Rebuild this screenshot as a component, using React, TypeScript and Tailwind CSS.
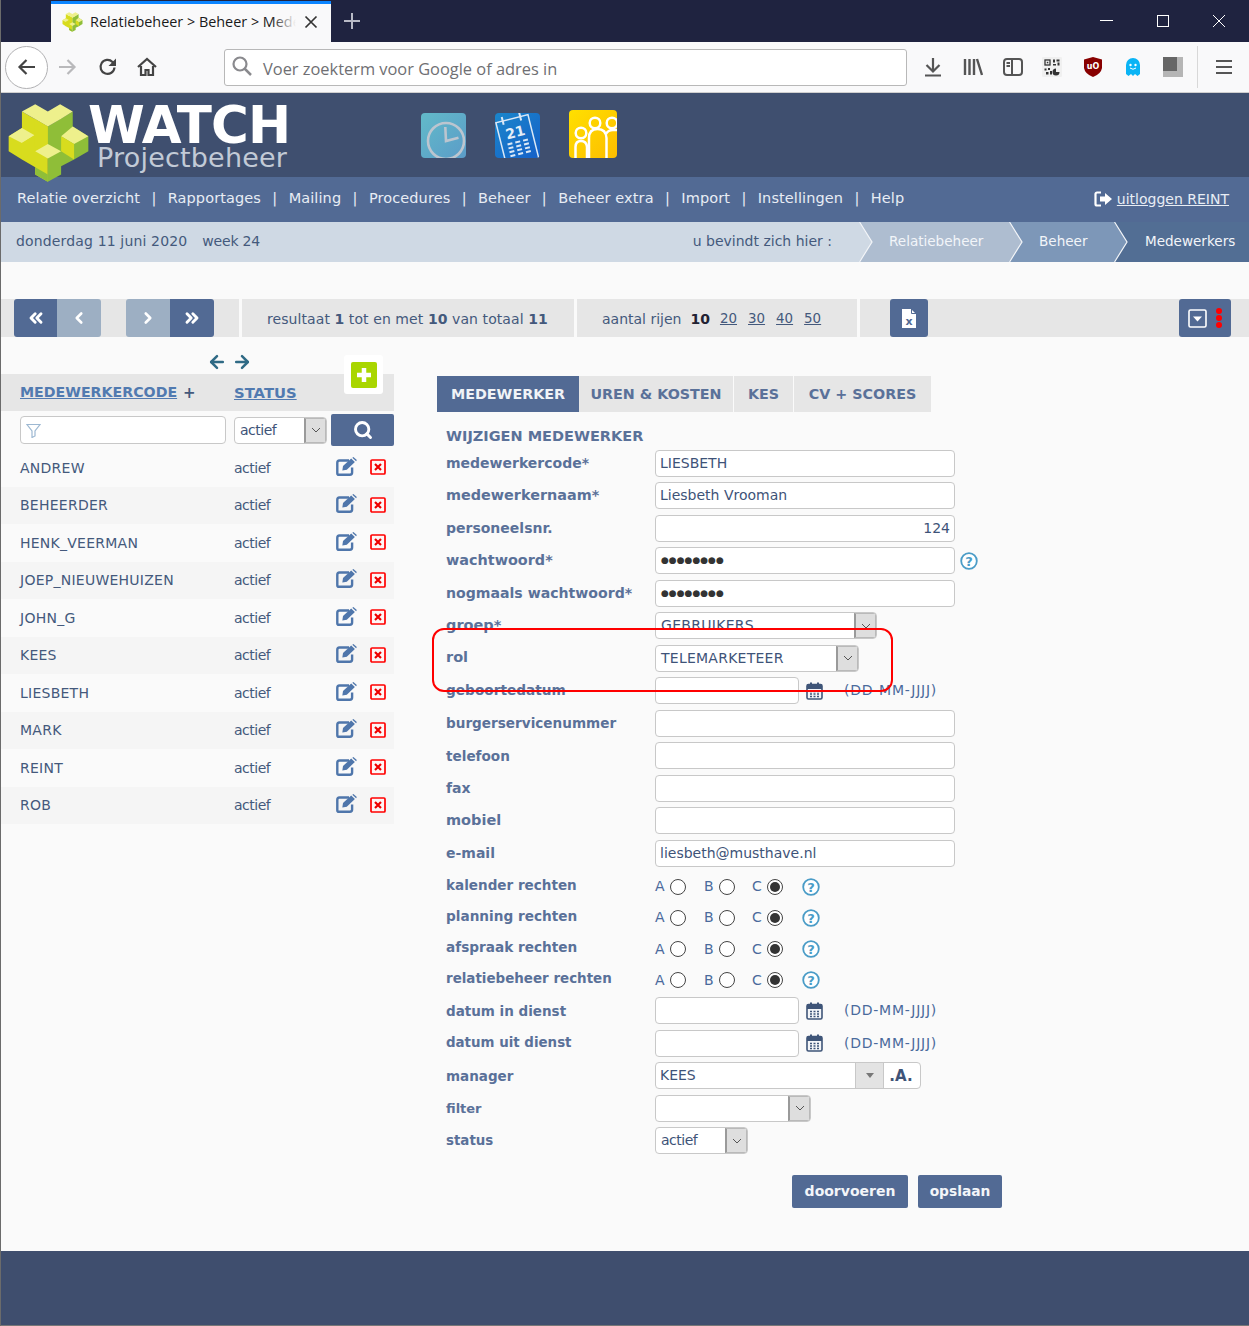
import React from "react";
import { ChevronsLeft, ChevronLeft, ChevronRight, ChevronsRight, Search, ArrowLeft, ArrowRight } from "lucide-react";

const F = "font-['DejaVu_Sans',sans-serif]";
const UI = "font-['Open_Sans','Noto_Sans',sans-serif]";

function Logo({ w, h }: { w: number; h: number }) {
  const top = "#eef08c", left = "#d8dc1e", right = "#8fbe38";
  return (
    <svg width={w} height={h} viewBox="20 25 250 240" className="shrink-0">
      <polygon points="25,125 65,100 65,50 143,95 143,262 105,240 105,218 65,195 25,170" fill={left} />
      <polygon points="143,95 218,50 218,95 265,125 265,170 222,195 183,215 183,240 143,262" fill={right} />
      <polygon points="65,50 105,28 143,50 180,28 218,50 183,72 143,95 103,72" fill={top} />
      <polygon points="25,125 65,100 103,122 65,145" fill={top} />
      <polygon points="218,95 265,125 222,148 183,125" fill={top} />
      <polygon points="183,125 222,148 222,195 183,170" fill={left} />
      <polygon points="65,145 103,122 103,170 65,195" fill={left} />
      <polygon points="103,122 103,72 143,95 143,150 105,170" fill={left} />
      <polygon points="105,170 143,148 183,170 143,192" fill={top} />
      <polygon points="105,218 105,240 143,262 143,240" fill={right} />
    </svg>
  );
}

function ClockTile() {
  return (
    <svg width="45" height="45" viewBox="0 0 45 45" className="mt-[20px] shrink-0">
      <defs>
        <linearGradient id="clk" x1="0" y1="0" x2="1" y2="1"><stop offset="0" stopColor="#62bac9" /><stop offset="1" stopColor="#5b9cc8" /></linearGradient>
        <clipPath id="clkc"><rect width="45" height="45" rx="4" /></clipPath>
      </defs>
      <g clipPath="url(#clkc)">
        <rect width="45" height="45" fill="url(#clk)" />
        <circle cx="25" cy="28" r="18" fill="none" stroke="#bcc5cf" strokeWidth="2.6" />
        <path d="M24.300 14L25 28L37.500 24.700" fill="none" stroke="#bcc5cf" strokeWidth="2.6" />
      </g>
    </svg>
  );
}

function CalendarTile() {
  return (
    <svg width="45" height="45" viewBox="0 0 45 45" className="mt-[20px] shrink-0">
      <defs>
        <linearGradient id="cal" x1="0" y1="0" x2="1" y2="1"><stop offset="0" stopColor="#1a86cb" /><stop offset="1" stopColor="#1660c8" /></linearGradient>
        <clipPath id="calc"><rect width="45" height="45" rx="4" /></clipPath>
      </defs>
      <g clipPath="url(#calc)">
        <rect width="45" height="45" fill="url(#cal)" />
        <g transform="rotate(-14 22 24)" fill="none" stroke="#dbe8f6" strokeWidth="1.500">
          <path d="M5 5h33v45H5z" />
          <path d="M12 1v8M30 1v8" strokeWidth="2" />
          <text x="21.500" y="24" textAnchor="middle" fontSize="14" fontWeight="700" fill="#e4eef8" stroke="none" fontFamily="DejaVu Sans">21</text>
          <path d="M11 29h5M19 29h5M27 29h5M11 33h5M19 33h5M27 33h5M11 37h5M19 37h5M27 37h5M11 41h5M19 41h5M27 41h5" strokeWidth="2" />
        </g>
      </g>
    </svg>
  );
}

function PeopleTile() {
  return (
    <svg width="48" height="48" viewBox="0 0 48 48" className="mt-[17px] shrink-0">
      <defs>
        <linearGradient id="ppl" x1="0" y1="0" x2="1" y2="1"><stop offset="0" stopColor="#ffe000" /><stop offset="1" stopColor="#fdbd00" /></linearGradient>
        <clipPath id="pplc"><rect width="48" height="48" rx="4" /></clipPath>
      </defs>
      <g clipPath="url(#pplc)">
        <rect width="48" height="48" fill="url(#ppl)" />
        <g fill="none" stroke="#fff" strokeWidth="2.500">
          <circle cx="12" cy="23" r="5.300" />
          <circle cx="26" cy="13" r="5.300" />
          <circle cx="43" cy="13" r="5.300" />
          <path d="M6.500 50V37q0-6 5.500-6t6 6v13" />
          <path d="M20 50V28q0-9 8.500-9t9 9v22" />
          <path d="M37 24q2-4 7-4h6" />
        </g>
      </g>
    </svg>
  );
}

function EditIcon() {
  return (
    <svg width="21" height="19" viewBox="0 0 21 19" className="ml-[1px] mt-[-3px] shrink-0">
      <path d="M13 3.500H3.500A2.300 2.300 0 0 0 1.300 5.800v10.400a1.600 1.600 0 0 0 1.600 1.600h11a2.200 2.200 0 0 0 2.200-2.200V10.500" fill="none" stroke="#4f76ab" strokeWidth="2.400" />
      <path d="M7 9 15.200 1.500l3.700 3.400L10.800 12.800 6.300 13.600Z" fill="#4f76ab" />
      <path d="M16.300 0.700 17.400 0 20.800 3 20.100 4.200 Z" fill="#4f76ab" />
    </svg>
  );
}

function DelIcon() {
  return (
    <svg width="16" height="16" viewBox="0 0 16 16" className="ml-[13px] mt-[-1px] shrink-0">
      <rect x="1" y="1" width="14" height="14" rx="1" fill="#fdf6f6" stroke="#f00" strokeWidth="1.700" />
      <path d="M5 5l6 6M11 5l-6 6" stroke="#e00" strokeWidth="2.200" />
    </svg>
  );
}

function Chevron() {
  return (
    <span className="flex h-full w-[22px] shrink-0 items-center justify-center border border-l-2 border-[#b9b9b9] border-l-[#9a9a9a] bg-[#dedede]">
      <svg width="10" height="6" viewBox="0 0 10 6"><path d="M1 1l4 4 4-4" fill="none" stroke="#555" strokeWidth="1" /></svg>
    </span>
  );
}

function Select({ value, w, cls = "" }: { value: string; w: number; cls?: string }) {
  return (
    <div className="flex h-[27px] items-center overflow-hidden rounded-[4px] border border-[#c8c8c8] bg-white" style={{ width: w }}>
      <span className={`flex-1 truncate pl-[5px] text-[14px] text-[#3e5378] ${cls}`}>{value}</span>
      <Chevron />
    </div>
  );
}

function Input({ value = "", w = 300, right = false, dots = false }: { value?: string; w?: number; right?: boolean; dots?: boolean }) {
  return (
    <div className={`flex h-[27px] items-center rounded-[4px] border border-[#c8c8c8] bg-white px-[4px] text-[14px] text-[#3e5378] ${right ? "justify-end" : ""}`} style={{ width: w }}>
      {dots ? <span className="pl-[1px] text-[9px] text-[#333]">●●●●●●●●</span> : value}
    </div>
  );
}

function Help() {
  return (
    <svg width="18" height="18" viewBox="0 0 18 18" className="shrink-0">
      <circle cx="9" cy="9" r="7.800" fill="#fff" stroke="#4a9cc7" strokeWidth="1.800" />
      <text x="9" y="13.600" textAnchor="middle" fontSize="13" fontWeight="700" fill="#4a9cc7" fontFamily="DejaVu Sans">?</text>
    </svg>
  );
}

function Cal() {
  return (
    <svg width="17" height="18" viewBox="0 0 17 18" className="shrink-0">
      <rect x="1" y="2.500" width="15" height="14.500" rx="1.500" fill="#f3f5f8" stroke="#3f5578" strokeWidth="1.600" />
      <rect x="1" y="2.500" width="15" height="4.500" fill="#3f5578" />
      <rect x="4" y="0.500" width="2" height="4" fill="#3f5578" />
      <rect x="11" y="0.500" width="2" height="4" fill="#3f5578" />
      <path d="M4 9.500h2M7.500 9.500h2M11 9.500h2M4 12h2M7.500 12h2M11 12h2M4 14.500h2M7.500 14.500h2M11 14.500h2" stroke="#3f5578" strokeWidth="1.400" />
    </svg>
  );
}

function Radio({ on = false }: { on?: boolean }) {
  return (
    <span className="flex h-[16px] w-[16px] shrink-0 items-center justify-center rounded-full border border-[#444] bg-white">
      {on && <span className="h-[10px] w-[10px] rounded-full bg-[#333]" />}
    </span>
  );
}

function Rights() {
  return (
    <div className="flex h-full items-center pt-[3px]">
      <span className="flex w-[49px] items-center gap-[1px] text-[14px] text-[#4a6a9c]"><span className="w-[14px]">A</span><Radio /></span>
      <span className="flex w-[48px] items-center gap-[2px] text-[14px] text-[#4a6a9c]"><span className="w-[13px]">B</span><Radio /></span>
      <span className="flex w-[50px] items-center gap-[2px] text-[14px] text-[#4a6a9c]"><span className="w-[13px]">C</span><Radio on /></span>
      <Help />
    </div>
  );
}

function DateField() {
  return (
    <div className="flex items-center">
      <Input w={144} />
      <span className="ml-[7px]"><Cal /></span>
      <span className="ml-[21px] text-[14px] tracking-[0.75px] text-[#4a6a9c]">(DD-MM-JJJJ)</span>
    </div>
  );
}

function Row({ label, size, children, h = "h-[32.5px]" }: { label: string; size: string; children?: React.ReactNode; h?: string }) {
  return (
    <div className={`flex items-center ${h}`}>
      <span className={`w-[209px] shrink-0 font-bold text-[#5a7199] ${size}`}>{label}</span>
      {children}
    </div>
  );
}

function Crumb({ label, w, bg, prev, pl }: { label: string; w: string; bg: string; prev: string; pl: string }) {
  return (
    <div className={`relative flex h-[40px] items-center pb-[1px] text-[13.55px] text-[#f2f5f9] ${w} ${bg} ${pl}`}>
      <svg width="14" height="40" viewBox="0 0 14 40" className="absolute left-0 top-0">
        <polygon points="0,0 13,20 0,40" fill={prev} />
        <polyline points="0.500,0 13,20 0.500,40" fill="none" stroke="#f4f6f9" strokeWidth="1.200" />
      </svg>
      {label}
    </div>
  );
}

function Sep() {
  return <span className="mx-[11.35px]">|</span>;
}

const people = ["ANDREW", "BEHEERDER", "HENK_VEERMAN", "JOEP_NIEUWEHUIZEN", "JOHN_G", "KEES", "LIESBETH", "MARK", "REINT", "ROB"];
const nav = ["Relatie overzicht", "Rapportages", "Mailing", "Procedures", "Beheer", "Beheer extra", "Import", "Instellingen", "Help"];

export default function App() {
  return (
    <div className={`relative flex h-[1326px] w-[1249px] flex-col overflow-hidden border-l border-[#6b6b6b] bg-[#fafafa] ${F}`}>
      {/* title bar */}
      <div className="flex h-[42px] shrink-0 items-end bg-[#1f2340] pl-[50px]">
        <div className={`flex h-[41px] w-[280px] items-center border-t-[3px] border-[#0a84ff] bg-[#f9f9fa] pb-[2px] pl-[11px] pr-[13px] text-[14.4px] text-[#1a1a1a] ${UI}`}>
          <span className="mr-[7px]"><Logo w={21} h={20} /></span>
          <span className="relative h-[20px] flex-1 overflow-hidden whitespace-nowrap leading-[20px]">
            Relatiebeheer &gt; Beheer &gt; Mede
            <span className="absolute inset-y-0 right-0 w-[24px] bg-gradient-to-r from-transparent to-[#f9f9fa]" />
          </span>
          <svg width="14" height="14" viewBox="0 0 14 14" className="ml-[8px] shrink-0"><path d="M1.500 1.500l11 11M12.500 1.500l-11 11" stroke="#333" strokeWidth="1.700" /></svg>
        </div>
        <div className="flex h-[42px] w-[42px] items-center justify-center">
          <svg width="18" height="18" viewBox="0 0 18 18"><path d="M9 1v16M1 9h16" stroke="#b8bac6" strokeWidth="2" /></svg>
        </div>
        <div className="flex-1" />
        <div className="mr-[2px] flex h-[42px] items-center">
          <svg width="56" height="42" viewBox="0 0 56 42"><path d="M21 20.500h13" stroke="#fff" /></svg>
          <svg width="56" height="42" viewBox="0 0 56 42"><rect x="22.500" y="15.500" width="11" height="11" fill="none" stroke="#fff" /></svg>
          <svg width="56" height="42" viewBox="0 0 56 42"><path d="M22 15l12 12M34 15L22 27" stroke="#fff" fill="none" /></svg>
        </div>
      </div>
      {/* browser toolbar */}
      <div className="flex h-[51px] shrink-0 items-center border-b border-[#cfcfcf] bg-[#f9f9fa]">
        <div className="ml-[4px] flex h-[43px] w-[43px] items-center justify-center rounded-full border border-[#b1b1b3] bg-white">
          <svg width="20" height="18" viewBox="0 0 20 18"><path d="M18 9H3M9.500 2L2.500 9l7 7" fill="none" stroke="#444" strokeWidth="2.200" /></svg>
        </div>
        <svg width="20" height="18" viewBox="0 0 20 18" className="ml-[9px]"><path d="M2 9h15M10.500 2l7 7-7 7" fill="none" stroke="#b9b9bb" strokeWidth="2.200" /></svg>
        <svg width="20" height="20" viewBox="0 0 20 20" className="ml-[21px]"><path d="M16.500 10.500a7 7 0 1 1-2-5.500L17 7.500" fill="none" stroke="#444" strokeWidth="2.200" /><path d="M18 1.500V9h-7.500z" fill="#444" /></svg>
        <svg width="20" height="20" viewBox="0 0 20 20" className="ml-[19px]"><path d="M1 10L10 2l9 8M4 9v9h4.500v-5h3v5H16V9" fill="none" stroke="#444" strokeWidth="2.200" /></svg>
        <div className={`ml-[67px] flex h-[37px] w-[683px] items-center rounded-[3px] border border-[#b8b8b8] bg-white pl-[6px] text-[16.4px] text-[#6f6f73] ${UI}`}>
          <svg width="22" height="22" viewBox="0 0 22 22" className="mr-[10px] mt-[-3px]"><circle cx="9" cy="9" r="6.500" fill="none" stroke="#8a8a8e" strokeWidth="2.200" /><path d="M13.500 13.500L20 20" stroke="#8a8a8e" strokeWidth="2.500" /></svg>
          <span className="pt-[5px]">Voer zoekterm voor Google of adres in</span>
        </div>
        <svg width="18" height="20" viewBox="0 0 18 20" className="ml-[17px]"><path d="M9 1v13M2.500 8L9 14.500 15.500 8M1 18.500h16" fill="none" stroke="#555" strokeWidth="2.200" /></svg>
        <svg width="20" height="18" viewBox="0 0 20 18" className="ml-[21px]"><path d="M2 1v16M6.500 1v16M11 1v16M14 1l5 16" fill="none" stroke="#555" strokeWidth="2.400" /></svg>
        <svg width="20" height="18" viewBox="0 0 20 18" className="ml-[20px]"><rect x="1" y="1" width="18" height="16" rx="3" fill="none" stroke="#555" strokeWidth="2" /><path d="M9 1v16M3.500 5H7M3.500 8H7" stroke="#555" strokeWidth="2" /></svg>
        <svg width="20" height="20" viewBox="0 0 20 20" className="ml-[19px]">
          <rect width="20" height="20" rx="1" fill="#f0f0f0" />
          <rect x="3" y="3" width="5" height="5" fill="none" stroke="#333" strokeWidth="1.300" />
          <rect x="4.800" y="4.800" width="1.500" height="1.500" fill="#333" />
          <path d="M11 2.500h2v3h-2zM14.500 2.500h3v2h-3zM15.500 5.500h2v3h-2zM11 7h3v1.500h-3zM2.500 11.500h2v2h-2zM6 11h2v2H6zM4 15h2.500v2.500H4zM8 14h2v3.500H8z" fill="#333" />
          <path d="M14 11.500a3.500 3.500 0 1 0 3.500 3.500H14z" fill="#333" />
        </svg>
        <svg width="18" height="20" viewBox="0 0 18 20" className="ml-[22px]"><path d="M9 0l9 2.500V11q-1 6-9 9-8-3-9-9V2.500z" fill="#800" /><text x="9" y="12" textAnchor="middle" fontSize="8" fontWeight="700" fill="#fff" fontFamily="DejaVu Sans">uO</text></svg>
        <svg width="16" height="20" viewBox="0 0 16 20" className="ml-[23px]"><path d="M1 17V8a7 7 0 0 1 14 0v9l-2.500 2-2.500-2-2 2-2-2-2.500 2z" fill="#0ab4f5" /><circle cx="5.500" cy="8" r="1.200" fill="#fff" /><circle cx="10.500" cy="8" r="1.200" fill="#fff" /><path d="M5 11q3 2.500 6 0" stroke="#fff" fill="none" /></svg>
        <span className="relative ml-[22px] h-[20px] w-[20px] bg-[#b5b5b5]"><span className="absolute left-0 top-0 h-[14px] w-[14px] bg-[#666]" /></span>
        <span className="ml-[14px] h-[42px] w-px bg-[#d8d8d8]" />
        <svg width="16" height="16" viewBox="0 0 16 16" className="ml-[18px]"><path d="M0 2h16M0 8h16M0 14h16" stroke="#555" strokeWidth="2.200" /></svg>
      </div>
      {/* site header */}
      <div className="relative z-10 flex h-[84px] shrink-0 items-start bg-[#3f4f6f]">
        <div className="ml-[6px] mt-[10px]"><Logo w={83} h={80} /></div>
        <div className="w-[331px] shrink-0">
          <div className="ml-[-2px] mt-[9px] text-[51.5px] font-bold leading-[46px] tracking-[-0.8px] text-white">WATCH</div>
          <div className="ml-[7px] text-[27px] leading-[20px] tracking-[0.2px] text-[#c2cad6]">Projectbeheer</div>
        </div>
        <div className="flex items-start gap-[29px]">
          <ClockTile /><CalendarTile /><PeopleTile />
        </div>
      </div>
      {/* nav */}
      <div className="flex h-[45px] shrink-0 items-center bg-[#526a94] pb-[1px] pl-[16px] pr-[20px] text-[14.5px] tracking-[0.1px] text-[#e8edf4]">
        {nav.map((n, i) => (
          <React.Fragment key={n}>
            {i > 0 && <Sep />}
            <span>{n}</span>
          </React.Fragment>
        ))}
        <span className="flex-1" />
        <svg width="20" height="16" viewBox="0 0 20 16" className="mr-[3px]"><path d="M7 1.500H3A1.500 1.500 0 0 0 1.500 3v10A1.500 1.500 0 0 0 3 14.500h4" fill="none" stroke="#fff" strokeWidth="2.200" /><path d="M11 2l7 6-7 6v-3.500H6v-5h5z" fill="#fff" /></svg>
        <span className="text-[14px] tracking-normal underline">uitloggen REINT</span>
      </div>
      {/* breadcrumb */}
      <div className="flex h-[40px] shrink-0 items-center bg-[#cfd9e4] text-[14px] text-[#44597c]">
        <span className="ml-[15px] pb-[1px] tracking-[0.15px]">donderdag 11 juni 2020</span>
        <span className="ml-[15px] pb-[1px] tracking-[-0.2px]">week 24</span>
        <span className="flex-1" />
        <span className="mr-[27px] pb-[1px]">u bevindt zich hier :</span>
        <Crumb label="Relatiebeheer" w="w-[150px]" bg="bg-[#aebdd0]" prev="#cfd9e4" pl="pl-[30px]" />
        <Crumb label="Beheer" w="w-[105px]" bg="bg-[#7d97b8]" prev="#aebdd0" pl="pl-[30px]" />
        <Crumb label="Medewerkers" w="w-[135px]" bg="bg-[#526e94]" prev="#7d97b8" pl="pl-[31px]" />
      </div>
      <div className="h-[37px] shrink-0" />
      {/* pager */}
      <div className="flex h-[38px] shrink-0 items-stretch bg-[#e6e6e6] text-[14px] text-[#44597c]">
        <div className="ml-[13px] flex">
          <span className="flex w-[43px] items-center justify-center rounded-l-[3px] bg-[#526a94]"><ChevronsLeft size={20} strokeWidth={3.500} color="#fff" /></span>
          <span className="flex w-[44px] items-center justify-center rounded-r-[3px] bg-[#9dafc3]"><ChevronLeft size={18} strokeWidth={3.500} color="#fff" /></span>
        </div>
        <div className="ml-[25px] flex">
          <span className="flex w-[44px] items-center justify-center rounded-l-[3px] bg-[#9dafc3]"><ChevronRight size={18} strokeWidth={3.500} color="#fff" /></span>
          <span className="flex w-[44px] items-center justify-center rounded-r-[3px] bg-[#526a94]"><ChevronsRight size={20} strokeWidth={3.500} color="#fff" /></span>
        </div>
        <span className="ml-[25px] w-[3px] bg-[#fafafa]" />
        <div className="flex w-[332px] items-center pl-[25px] pt-[2px] tracking-[0.08px]">resultaat&nbsp;<b>1</b>&nbsp;tot en met&nbsp;<b>10</b>&nbsp;van totaal&nbsp;<b>11</b></div>
        <span className="w-[3px] bg-[#fafafa]" />
        <div className="flex w-[280px] items-center pl-[25px] pt-[2px]">
          aantal rijen
          <b className="ml-[9px] text-[#223]">10</b>
          <span className="ml-[10px] text-[13.4px] underline">20</span>
          <span className="ml-[11px] text-[13.4px] underline">30</span>
          <span className="ml-[11px] text-[13.4px] underline">40</span>
          <span className="ml-[11px] text-[13.4px] underline">50</span>
        </div>
        <span className="w-[3px] bg-[#fafafa]" />
        <span className="ml-[30px] flex w-[38px] items-center justify-center rounded-[3px] bg-[#526a94]">
          <svg width="14" height="19" viewBox="0 0 14 19"><path d="M0 0h9l5 5v14H0z" fill="#fff" /><path d="M9.500 0v4.500H14" fill="none" stroke="#526a94" /><text x="7" y="16" textAnchor="middle" fontSize="11" fontWeight="700" fill="#526a94" fontFamily="DejaVu Sans">x</text></svg>
        </span>
        <span className="flex-1" />
        <span className="mr-[18px] flex w-[52px] items-center justify-center gap-[9px] rounded-[3px] bg-[#526a94]">
          <svg width="19" height="19" viewBox="0 0 19 19"><rect x="1" y="1" width="17" height="17" rx="1.500" fill="none" stroke="#fff" strokeWidth="1.600" /><path d="M5 7.500h9l-4.500 5z" fill="#fff" /></svg>
          <span className="flex flex-col gap-[1px]"><i className="h-[6px] w-[6px] rounded-full bg-[#f00]" /><i className="h-[6px] w-[6px] rounded-full bg-[#f00]" /><i className="h-[6px] w-[6px] rounded-full bg-[#f00]" /></span>
        </span>
      </div>
      {/* body */}
      <div className="flex flex-1 items-start">
        {/* list */}
        <div className="relative mt-[37px] w-[393px] shrink-0">
          <div className="absolute left-[206px] top-[-22px] flex text-[#2f6a85]">
            <ArrowLeft size={20} strokeWidth={3} /><ArrowRight size={20} strokeWidth={3} className="ml-[5px]" />
          </div>
          <div className="absolute left-[343px] top-[-19px] flex h-[39px] w-[39px] items-center justify-center rounded-[3px] bg-white">
            <span className="flex h-[26px] w-[26px] items-center justify-center rounded-[2px] bg-[#a9d600]">
              <svg width="18" height="18" viewBox="0 0 18 18"><path d="M9 2v14M2 9h14" stroke="#fff" strokeWidth="4.500" /></svg>
            </span>
          </div>
          <div className="flex h-[37px] items-center bg-[#e6e6e6] pt-[1px] font-bold text-[#517ab0]">
            <span className="ml-[19px] text-[14.2px] underline">MEDEWERKERCODE</span>
            <span className="ml-[6px] text-[15px] text-[#44597c]">+</span>
            <span className="absolute left-[233px] text-[14.8px] underline">STATUS</span>
          </div>
          <div className="flex h-[38px] items-center">
            <div className="ml-[19px] flex h-[28px] w-[206px] items-center rounded-[4px] border border-[#c8c8c8] bg-white pl-[5px]">
              <svg width="15" height="15" viewBox="0 0 15 15"><path d="M1 1.500h13L9 8v5l-3 1.500V8z" fill="none" stroke="#9db8d2" strokeWidth="1.200" /></svg>
            </div>
            <div className="ml-[8px]"><Select value="actief" w={93} cls="tracking-[-0.5px]" /></div>
            <span className="ml-[4px] flex h-[32px] w-[63px] items-center justify-center rounded-[2px] bg-[#526a94]"><Search size={20} strokeWidth={3.500} color="#fff" /></span>
          </div>
          {people.map((p, i) => (
            <div key={p} className={`flex h-[37.500px] items-center text-[14px] text-[#44597c] ${i % 2 ? "bg-[#f5f5f5]" : ""}`}>
              <span className="ml-[19px] w-[214px] pt-[1px] tracking-[0.25px]">{p}</span>
              <span className="w-[101px] pt-[1px] tracking-[-0.5px]">actief</span>
              <EditIcon />
              <DelIcon />
            </div>
          ))}
        </div>
        {/* form */}
        <div className="ml-[43px] mt-[39px] w-[600px]">
          <div className="flex h-[36px] items-stretch text-[14.3px] font-bold text-[#5a7199]">
            <span className="flex w-[142px] items-center justify-center bg-[#526a94] pt-[1px] text-[#f0f3f7]">MEDEWERKER</span>
            <span className="flex w-[155px] items-center justify-center border-r border-[#fafafa] bg-[#e6e6e6] pt-[1px]">UREN &amp; KOSTEN</span>
            <span className="flex w-[60px] items-center justify-center border-r border-[#fafafa] bg-[#e6e6e6] pt-[1px]">KES</span>
            <span className="flex w-[137px] items-center justify-center bg-[#e6e6e6] pt-[1px]">CV + SCORES</span>
          </div>
          <div className="pl-[9px] pt-[7px]">
            <div className="h-[28px] pt-[7px] text-[14.5px] font-bold leading-[20px] text-[#5a7199]">WIJZIGEN MEDEWERKER</div>
            <Row label="medewerkercode*" size="text-[14px]"><Input value="LIESBETH" /></Row>
            <Row label="medewerkernaam*" size="text-[14.4px]"><Input value="Liesbeth Vrooman" /></Row>
            <Row label="personeelsnr." size="text-[14px]"><Input value="124" right /></Row>
            <Row label="wachtwoord*" size="text-[14.4px]"><Input dots /><span className="ml-[5px]"><Help /></span></Row>
            <Row label="nogmaals wachtwoord*" size="text-[14.1px]"><Input dots /></Row>
            <Row label="groep*" size="text-[14.5px]"><Select value="GEBRUIKERS" w={222} cls="tracking-[0.3px]" /></Row>
            <Row label="rol" size="text-[14.5px]"><Select value="TELEMARKETEER" w={204} cls="tracking-[0.25px]" /></Row>
            <Row label="geboortedatum" size="text-[13.7px]"><DateField /></Row>
            <Row label="burgerservicenummer" size="text-[13.6px]"><Input /></Row>
            <Row label="telefoon" size="text-[13.6px]"><Input /></Row>
            <Row label="fax" size="text-[14px]"><Input /></Row>
            <Row label="mobiel" size="text-[14.5px]"><Input /></Row>
            <Row label="e-mail" size="text-[14px]"><Input value="liesbeth@musthave.nl" /></Row>
            <Row label="kalender rechten" size="text-[13.55px]" h="h-[31.25px]"><Rights /></Row>
            <Row label="planning rechten" size="text-[13.65px]" h="h-[31.25px]"><Rights /></Row>
            <Row label="afspraak rechten" size="text-[13.65px]" h="h-[31.25px]"><Rights /></Row>
            <Row label="relatiebeheer rechten" size="text-[13.45px]" h="h-[31.25px]"><Rights /></Row>
            <Row label="datum in dienst" size="text-[13.5px]"><DateField /></Row>
            <Row label="datum uit dienst" size="text-[13.4px]"><DateField /></Row>
            <Row label="manager" size="text-[13.5px]">
              <div className="flex h-[27px] w-[266px] items-stretch overflow-hidden rounded-[4px] border border-[#c8c8c8] bg-white">
                <span className="flex flex-1 items-center pl-[4px] text-[14px] text-[#3e5378]">KEES</span>
                <span className="flex w-[29px] items-center justify-center border-x border-[#c8c8c8] bg-[#e3e3e3]">
                  <svg width="10" height="6" viewBox="0 0 10 6"><path d="M1 0h8L5 5z" fill="#777" /></svg>
                </span>
                <span className="flex w-[36px] items-center justify-center pr-[2px] text-[15px] font-bold text-[#3e5378]">.A.</span>
              </div>
            </Row>
            <Row label="filter" size="text-[13px]"><Select value="" w={156} /></Row>
            <Row label="status" size="text-[13.4px]"><Select value="actief" w={93} cls="tracking-[-0.5px]" /></Row>
            <div className="mt-[18px] flex gap-[10px] pl-[346px]">
              <span className="flex h-[33px] w-[116px] items-center justify-center rounded-[2px] bg-[#526a94] text-[14px] font-bold text-[#f2f5f9]">doorvoeren</span>
              <span className="flex h-[33px] w-[84px] items-center justify-center rounded-[2px] bg-[#526a94] text-[13.8px] font-bold text-[#f2f5f9]">opslaan</span>
            </div>
          </div>
        </div>
      </div>
      {/* footer */}
      <div className="h-[74px] shrink-0 bg-[#3f4e6e]" />
      <div className="h-[1px] shrink-0 bg-[#777]" />
      {/* annotation */}
      <div className="pointer-events-none absolute left-[431px] top-[628px] z-20 h-[64px] w-[461px] rounded-[12px] border-2 border-[#f00]" />
    </div>
  );
}
